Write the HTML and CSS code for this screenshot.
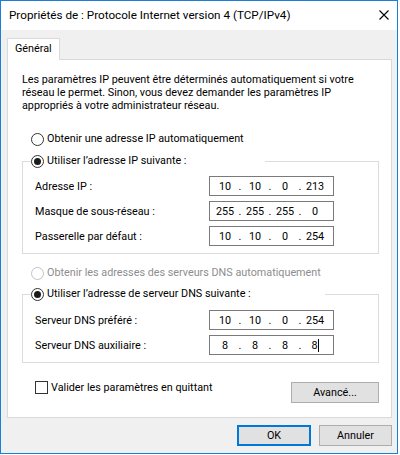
FILE: index.html
```html
<!DOCTYPE html>
<html lang="fr">
<head>
<meta charset="utf-8">
<title>Propriétés de : Protocole Internet version 4 (TCP/IPv4)</title>
<link rel="stylesheet" href="styles.css">
</head>
<body>
<div class="window">
  <div class="titlebar">
    <span class="title">Propriétés de : Protocole Internet version 4 (TCP/IPv4)</span>
    <span class="close">
      <svg width="10" height="10" viewBox="0 0 10 10"><path d="M0.5 0.5 L9.5 9.5 M9.5 0.5 L0.5 9.5" stroke="#000" stroke-width="1.1" fill="none"/></svg>
    </span>
  </div>
  <div class="body">
    <div class="tabs"><div class="tab">Général</div></div>
    <div class="panel">
      <p class="intro">Les paramètres IP peuvent être déterminés automatiquement si votre réseau le permet. Sinon, vous devez demander les paramètres IP appropriés à votre administrateur réseau.</p>

      <div class="option"><span class="radio"></span><span>Obtenir une adresse IP automatiquement</span></div>

      <fieldset class="group group-ip">
        <legend class="legend legend-ip"><span class="option"><span class="radio checked"></span><span>Utiliser l’adresse IP suivante :</span></span></legend>
        <div class="rows">
          <div class="row"><span class="label">Adresse IP :</span>
            <div class="ipbox"><span class="oct">10</span><span class="dot">.</span><span class="oct">10</span><span class="dot">.</span><span class="oct">0</span><span class="dot">.</span><span class="oct">213</span></div></div>
          <div class="row"><span class="label">Masque de sous-réseau :</span>
            <div class="ipbox"><span class="oct">255</span><span class="dot">.</span><span class="oct">255</span><span class="dot">.</span><span class="oct">255</span><span class="dot">.</span><span class="oct">0</span></div></div>
          <div class="row"><span class="label">Passerelle par défaut :</span>
            <div class="ipbox"><span class="oct">10</span><span class="dot">.</span><span class="oct">10</span><span class="dot">.</span><span class="oct">0</span><span class="dot">.</span><span class="oct">254</span></div></div>
        </div>
      </fieldset>

      <div class="option option-dns-auto disabled"><span class="radio"></span><span>Obtenir les adresses des serveurs DNS automatiquement</span></div>

      <fieldset class="group group-dns">
        <legend class="legend legend-dns"><span class="option"><span class="radio checked"></span><span>Utiliser l’adresse de serveur DNS suivante :</span></span></legend>
        <div class="rows rows-dns">
          <div class="row"><span class="label">Serveur DNS préféré :</span>
            <div class="ipbox"><span class="oct">10</span><span class="dot">.</span><span class="oct">10</span><span class="dot">.</span><span class="oct">0</span><span class="dot">.</span><span class="oct">254</span></div></div>
          <div class="row"><span class="label">Serveur DNS auxiliaire :</span>
            <div class="ipbox"><span class="oct">8</span><span class="dot">.</span><span class="oct">8</span><span class="dot">.</span><span class="oct">8</span><span class="dot">.</span><span class="oct"><span class="caret">8</span></span></div></div>
        </div>
      </fieldset>

      <div class="bottomrow">
        <div class="check"><span class="box"></span><span>Valider les paramètres en quittant</span></div>
        <button class="btn btn-adv">Avancé...</button>
      </div>
    </div>
    <div class="actions">
      <button class="btn btn-main default">OK</button>
      <button class="btn btn-main">Annuler</button>
    </div>
  </div>
</div>
</body>
</html>
```
FILE: styles.css
```css
* { box-sizing: border-box; }
html, body { margin: 0; padding: 0; background: #ffffff; }
body {
  font-family: Roboto, Lato, "Noto Sans", sans-serif;
  font-size: 10.8px;
  color: #000;
}
.window {
  width: 398px;
  height: 454px;
  border: 1px solid #1c7fd6;
  display: flex;
  flex-direction: column;
  background: #f0f0f0;
}
.titlebar {
  height: 29px;
  background: #ffffff;
  display: flex;
  align-items: center;
  justify-content: space-between;
  padding-left: 8px;
}
.title { font-size: 11.7px; line-height: 16px; padding-bottom: 1px; }
.close {
  width: 26px;
  height: 29px;
  display: flex;
  align-items: center;
  justify-content: center;
  padding-bottom: 1px;
}
.close svg { display: block; }
.body {
  flex: 1;
  padding: 8px 5px 0 6px;
  display: flex;
  flex-direction: column;
}
.tabs { display: flex; }
.tab {
  position: relative;
  z-index: 1;
  width: 53px;
  height: 22px;
  margin-bottom: -1px;
  background: #fff;
  border: 1px solid #d9d9d9;
  border-bottom: none;
  padding-left: 7px;
  line-height: 20px;
}
.panel {
  height: 359px;
  background: #fff;
  border: 1px solid #d9d9d9;
  display: flex;
  flex-direction: column;
}
.intro {
  margin: 13px 0 0 14px;
  width: 340px;
  line-height: 13px;
}
.option {
  display: flex;
  align-items: center;
  height: 16px;
  line-height: 16px;
  gap: 3px;
  white-space: nowrap;
}
.panel > .option { margin: 19px 0 0 23px; }
.panel > .option-dns-auto { margin-top: 11px; }
.radio {
  width: 13px;
  height: 13px;
  border: 1px solid #333;
  border-radius: 50%;
  background: #fff;
  display: flex;
  align-items: center;
  justify-content: center;
  flex: none;
}
.radio.checked::after {
  content: "";
  width: 7px;
  height: 7px;
  border-radius: 50%;
  background: #1a1a1a;
}
.disabled { color: #8d8d8d; }
.disabled .radio { border-color: #c2c2c2; }
.group {
  margin: 6px 0 0 14px;
  width: 357px;
  border: 1px solid #dcdcdc;
  padding: 0 0 7px 0;
  min-width: 0;
}
.group-dns { margin-top: 5px; }
.legend {
  padding: 0;
  margin-left: 8px;
  height: 16px;
}
.legend-ip { width: 234px; }
.legend-dns { width: 294px; }
.rows {
  padding: 7px 0 0 12px;
  display: flex;
  flex-direction: column;
  gap: 5px;
}
.rows-dns { padding-top: 8px; }
.row {
  display: flex;
  align-items: center;
  height: 20px;
}
.label { width: 174px; flex: none; }
.ipbox {
  width: 125px;
  height: 20px;
  border: 1px solid #7a7a7a;
  background: #fff;
  display: flex;
  align-items: center;
  padding-left: 3px;
  line-height: 15px;
}
.oct { width: 24px; text-align: center; }
.dot { width: 6px; text-align: center; }
.caret { border-right: 1px solid #000; }
.bottomrow {
  margin: 17px 12px 0 27px;
  display: flex;
  justify-content: space-between;
  align-items: flex-start;
}
.check {
  display: flex;
  align-items: center;
  gap: 3px;
  height: 15px;
  line-height: 15px;
}
.box {
  width: 13px;
  height: 13px;
  border: 1px solid #333;
  background: #fff;
  flex: none;
}
.btn {
  font: inherit;
  color: #000;
  background: #e1e1e1;
  border: 1px solid #adadad;
  padding: 0;
  margin: 0;
  border-radius: 0;
  line-height: 17px;
}
.btn-adv { width: 88px; height: 21px; margin-top: 2px; }
.actions {
  display: flex;
  justify-content: flex-end;
  gap: 8px;
  margin-top: 7px;
}
.btn-main { width: 73px; height: 21px; }
.btn.default { border: 2px solid #0078d7; width: 74px; }
```
